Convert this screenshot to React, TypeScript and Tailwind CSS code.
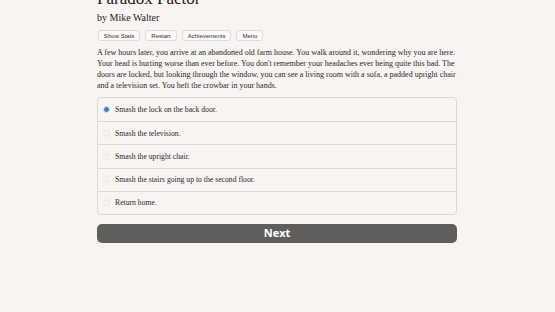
import { useState } from "react";

const CHOICES = [
  "Smash the lock on the back door.",
  "Smash the television.",
  "Smash the upright chair.",
  "Smash the stairs going up to the second floor.",
  "Return home.",
];

const MENU = ["Show Stats", "Restart", "Achievements", "Menu"];

export default function App() {
  const [picked, setPicked] = useState(0);

  return (
    <div className="min-h-screen w-full bg-[#f8f4f1] overflow-hidden" style={{ fontFamily: '"Liberation Serif", "DejaVu Serif", serif' }}>
      <div className="w-[360px] ml-[97px] -mt-[11px]">
        <h1 className="text-[17px] leading-[20px] text-[#222]">Paradox Factor</h1>
        <p className="text-[10px] leading-[12px] text-[#222] mt-[3px]">by Mike Walter</p>

        {/* Top buttons */}
        <div className="flex gap-[5px] mt-[6px] ml-[1px]" style={{ fontFamily: '"Liberation Sans", Arial, sans-serif' }}>
          {MENU.map(m => (
            <button key={m} className="h-[11px] px-[5px] rounded-[3px] border border-[#dedad6] bg-[#fbf9f7] text-[6px] leading-none text-[#333]">
              {m}
            </button>
          ))}
        </div>

        {/* Story */}
        <p className="mt-[6px] text-[8px] leading-[11px] text-[#2a2a2a]">
          A few hours later, you arrive at an abandoned old farm house. You walk around it, wondering why you are here.
          Your head is hurting worse than ever before. You don't remember your headaches ever being quite this bad. The
          doors are locked, but looking through the window, you can see a living room with a sofa, a padded upright chair
          and a television set. You heft the crowbar in your hands.
        </p>

        {/* Choices */}
        <div className="mt-[6px] rounded-[4px] border border-[#dcd8d4] bg-[#f8f4f1] overflow-hidden">
          {CHOICES.map((c, i) => (
            <label key={c}
              className={`flex items-center h-[23.2px] pl-[5px] gap-[5px] cursor-pointer ${i > 0 ? "border-t border-[#dcd8d4]" : ""}`}
              onClick={() => setPicked(i)}>
              <span className={`w-[7px] h-[7px] rounded-full shrink-0 ${picked === i ? "bg-[#3b7dd8] border-[1.5px] border-[#dce6f4]" : "bg-[#f6f3f0] border border-[#ece8e4]"}`} />
              <span className="text-[7.7px] text-[#2a2a2a]">{c}</span>
            </label>
          ))}
        </div>

        {/* Next */}
        <button className="mt-[9px] w-full h-[19px] rounded-[5px] bg-[#5f5e5c] text-white text-[11px] font-bold"
          style={{ fontFamily: '"Open Sans", "Liberation Sans", sans-serif' }}>
          Next
        </button>
      </div>
    </div>
  );
}
